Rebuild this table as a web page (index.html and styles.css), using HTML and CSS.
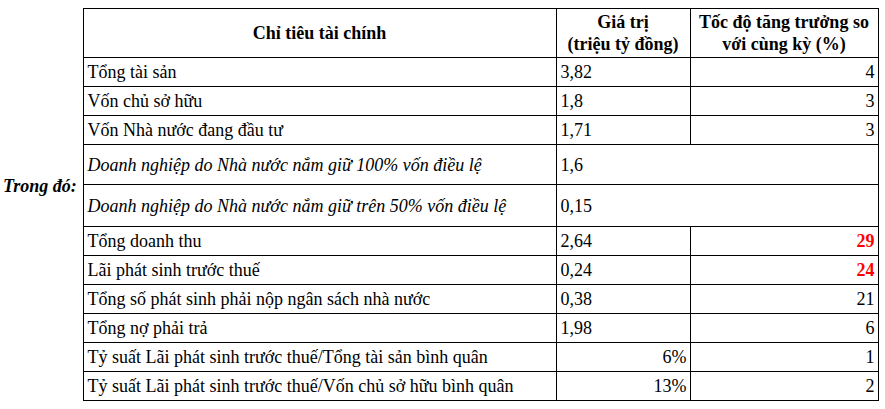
FILE: index.html
```html
<!DOCTYPE html>
<html lang="vi">
<head>
<meta charset="utf-8">
<title>Chỉ tiêu tài chính</title>
<link rel="stylesheet" href="styles.css">
</head>
<body>
<table class="fin">
  <colgroup>
    <col class="c-side">
    <col class="c-name">
    <col class="c-val">
    <col class="c-rate">
  </colgroup>
  <thead>
    <tr class="head">
      <th class="side"></th>
      <th>Chỉ tiêu tài chính</th>
      <th>Giá trị<br>(triệu tỷ đồng)</th>
      <th>Tốc độ tăng trưởng so<br>với cùng kỳ (%)</th>
    </tr>
  </thead>
  <tbody>
    <tr><td class="side"></td><td>Tổng tài sản</td><td>3,82</td><td class="num">4</td></tr>
    <tr><td class="side"></td><td>Vốn chủ sở hữu</td><td>1,8</td><td class="num">3</td></tr>
    <tr><td class="side"></td><td>Vốn Nhà nước đang đầu tư</td><td>1,71</td><td class="num">3</td></tr>
    <tr class="sub sub1"><td class="side label" rowspan="2">Trong đó:</td><td class="it">Doanh nghiệp do Nhà nước nắm giữ 100% vốn điều lệ</td><td colspan="2">1,6</td></tr>
    <tr class="sub sub2"><td class="it">Doanh nghiệp do Nhà nước nắm giữ trên 50% vốn điều lệ</td><td colspan="2">0,15</td></tr>
    <tr><td class="side"></td><td>Tổng doanh thu</td><td>2,64</td><td class="num hot">29</td></tr>
    <tr><td class="side"></td><td>Lãi phát sinh trước thuế</td><td>0,24</td><td class="num hot">24</td></tr>
    <tr><td class="side"></td><td>Tổng số phát sinh phải nộp ngân sách nhà nước</td><td>0,38</td><td class="num">21</td></tr>
    <tr><td class="side"></td><td>Tổng nợ phải trả</td><td>1,98</td><td class="num">6</td></tr>
    <tr><td class="side"></td><td>Tỷ suất Lãi phát sinh trước thuế/Tổng tài sản bình quân</td><td class="num">6%</td><td class="num">1</td></tr>
    <tr><td class="side"></td><td>Tỷ suất Lãi phát sinh trước thuế/Vốn chủ sở hữu bình quân</td><td class="num">13%</td><td class="num">2</td></tr>
  </tbody>
</table>
</body>
</html>
```
FILE: styles.css
```css
html, body {
  margin: 0;
  padding: 0;
  background: #ffffff;
}
body {
  font-family: "Liberation Serif", "Times New Roman", serif;
  color: #000000;
  padding-top: 8px;
}
.fin {
  border-collapse: collapse;
  table-layout: fixed;
  width: 878px;
  font-family: "Liberation Serif", "Times New Roman", serif;
  font-size: 18px;
}
.c-side { width: 83px; }
.c-name { width: 473px; }
.c-val { width: 134px; }
.c-rate { width: 188px; }
.fin th,
.fin td {
  font-family: "Liberation Serif", "Times New Roman", serif;
  border: 1px solid #000000;
  padding: 0 3px 0 4px;
  height: 28px;
  vertical-align: middle;
  text-align: left;
  line-height: 20px;
  white-space: nowrap;
}
.fin .side {
  border: none;
  padding: 0 0 0 3px;
}
.fin .head th {
  height: 48px;
  font-size: 18px;
  font-weight: bold;
  text-align: center;
  line-height: 22px;
  padding: 0;
}
.fin .head th.side { border: none; }
.fin .sub1 td { height: 39px; }
.fin .sub2 td { height: 41px; }
.fin .label {
  font-weight: bold;
  font-style: italic;
  font-size: 18px;
}
.fin .it { font-style: italic; }
.fin .num { text-align: right; }
.fin .hot {
  color: #ff0000;
  font-weight: bold;
}
```
